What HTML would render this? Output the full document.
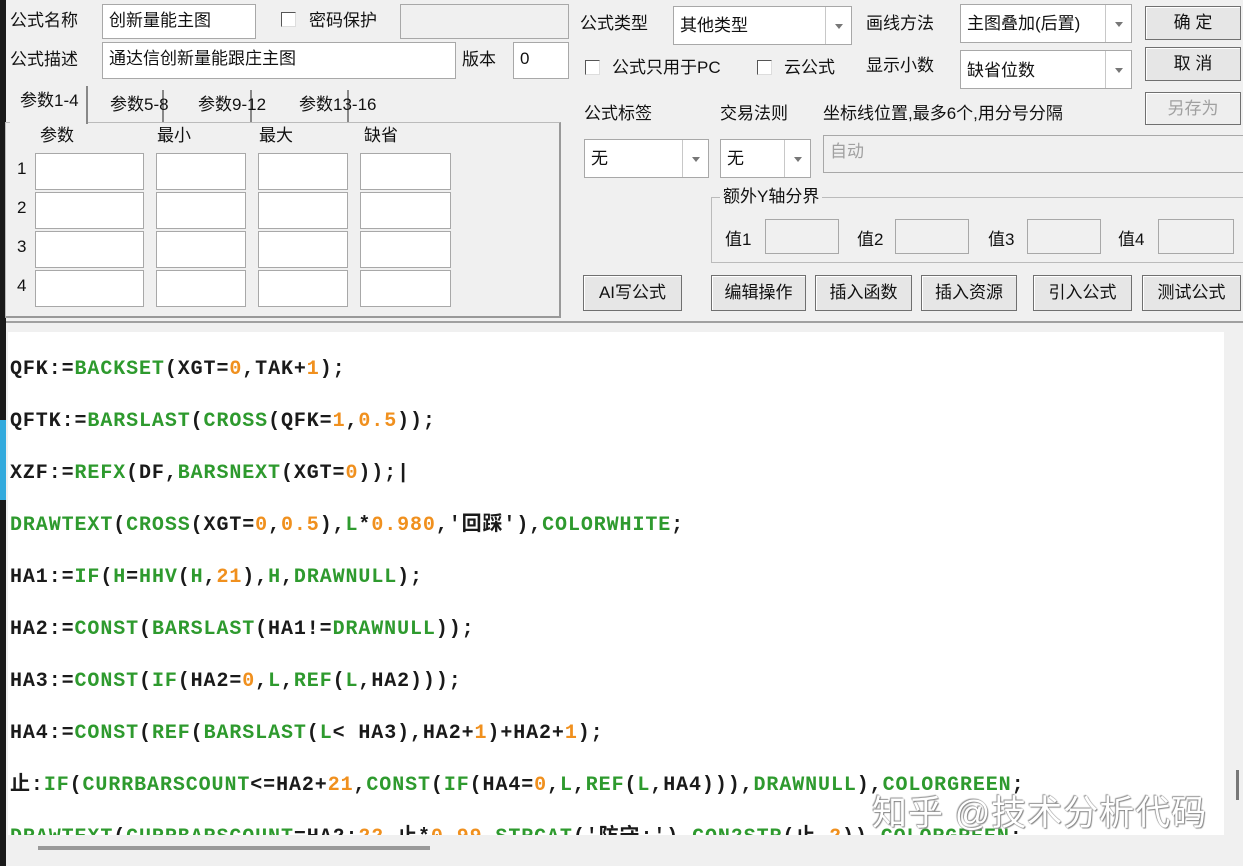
<!DOCTYPE html><html><head><meta charset="utf-8"><style>
*{margin:0;padding:0;box-sizing:border-box}
body{width:1243px;height:866px;background:#f0f0f0;position:relative;overflow:hidden;font-family:"Liberation Sans","Noto Sans CJK SC",sans-serif;font-size:17px;color:#111}
.a{position:absolute;white-space:nowrap;line-height:22px}
.in{position:absolute;background:#fff;border:1px solid #a8a8a8;padding:2px 6px;line-height:28px}
.dis{background:#f0f0f0;color:#a0a0a0}
.cb{position:absolute;width:15px;height:15px;border:1px solid #555;border-right-color:#ddd;border-bottom-color:#ddd;background:#fff}
.cmb{position:absolute;background:#fff;border:1px solid #a8a8a8;padding:0 6px;}
.cmb .ar{position:absolute;right:0;top:0;bottom:0;width:26px;border-left:1px solid #c8c8c8}
.cmb .ar:after{content:"";position:absolute;left:9px;top:50%;margin-top:-2px;border:4px solid transparent;border-top:5px solid #777}
.btn{position:absolute;border:1px solid #707070;background:#e6e6e6;box-shadow:inset 1px 1px 0 #fff;text-align:center;font-size:17px}
.code{position:absolute;left:8px;top:332px;width:1216px;height:503px;background:#fff;overflow:hidden;font-family:"Liberation Mono","Noto Sans CJK SC",monospace;font-weight:bold;font-size:20px;letter-spacing:0.9px;color:#1a1a1a}
.code div{position:absolute;left:2px;white-space:pre;line-height:24px;height:24px}
.g{color:#2e9a2e}.o{color:#f0901e}
</style></head><body>
<div class="a" style="left:0;top:0;width:6px;height:866px;background:#1a1a1a"></div>
<div class="a" style="left:0;top:420px;width:6px;height:80px;background:#3ad"></div>
<div class="a" style="left:10px;top:10px">公式名称</div>
<div class="in" style="left:102px;top:4px;width:154px;height:35px">创新量能主图</div>
<div class="cb" style="left:281px;top:12px"></div>
<div class="a" style="left:309px;top:10px">密码保护</div>
<div class="in dis" style="left:400px;top:4px;width:169px;height:35px"></div>
<div class="a" style="left:10px;top:49px">公式描述</div>
<div class="in" style="left:102px;top:42px;width:354px;height:37px">通达信创新量能跟庄主图</div>
<div class="a" style="left:462px;top:49px">版本</div>
<div class="in" style="left:513px;top:42px;width:56px;height:37px">0</div>
<div class="a" style="left:5px;top:122px;width:556px;height:196px;border:1px solid #bbb;border-right:2px solid #999;border-bottom:2px solid #999;background:#f0f0f0"></div>
<div class="a" style="left:10px;top:86px;width:78px;height:38px;background:#f0f0f0;border-right:2px solid #888;padding:4px 0 0 10px">参数1-4</div>
<div class="a" style="left:100px;top:90px;width:64px;height:32px;border-right:2px solid #888;padding:4px 0 0 10px">参数5-8</div>
<div class="a" style="left:166px;top:90px;width:86px;height:32px;border-right:2px solid #888;padding:4px 0 0 32px;">参数9-12</div>
<div class="a" style="left:253px;top:90px;width:96px;height:32px;border-right:2px solid #888;padding:4px 0 0 46px">参数13-16</div>
<div class="a" style="left:40px;top:125px">参数</div><div class="a" style="left:157px;top:125px">最小</div><div class="a" style="left:259px;top:125px">最大</div><div class="a" style="left:364px;top:125px">缺省</div>
<div class="a" style="left:17px;top:158px">1</div><div class="a" style="left:17px;top:197px">2</div><div class="a" style="left:17px;top:236px">3</div><div class="a" style="left:17px;top:275px">4</div>
<div class="in" style="left:35px;top:153px;width:109px;height:37px"></div><div class="in" style="left:156px;top:153px;width:90px;height:37px"></div><div class="in" style="left:258px;top:153px;width:90px;height:37px"></div><div class="in" style="left:360px;top:153px;width:91px;height:37px"></div>
<div class="in" style="left:35px;top:192px;width:109px;height:37px"></div><div class="in" style="left:156px;top:192px;width:90px;height:37px"></div><div class="in" style="left:258px;top:192px;width:90px;height:37px"></div><div class="in" style="left:360px;top:192px;width:91px;height:37px"></div>
<div class="in" style="left:35px;top:231px;width:109px;height:37px"></div><div class="in" style="left:156px;top:231px;width:90px;height:37px"></div><div class="in" style="left:258px;top:231px;width:90px;height:37px"></div><div class="in" style="left:360px;top:231px;width:91px;height:37px"></div>
<div class="in" style="left:35px;top:270px;width:109px;height:37px"></div><div class="in" style="left:156px;top:270px;width:90px;height:37px"></div><div class="in" style="left:258px;top:270px;width:90px;height:37px"></div><div class="in" style="left:360px;top:270px;width:91px;height:37px"></div>
<div class="a" style="left:580px;top:13px">公式类型</div>
<div class="cmb" style="left:673px;top:6px;width:179px;height:39px;line-height:37px">其他类型<span class="ar"></span></div>
<div class="a" style="left:866px;top:13px">画线方法</div>
<div class="cmb" style="left:960px;top:4px;width:172px;height:39px;line-height:37px">主图叠加(后置)<span class="ar"></span></div>
<div class="btn" style="left:1145px;top:6px;width:96px;height:34px;line-height:32px">确 定</div>
<div class="cb" style="left:585px;top:60px"></div><div class="a" style="left:612px;top:57px">公式只用于PC</div>
<div class="cb" style="left:757px;top:60px"></div><div class="a" style="left:784px;top:57px">云公式</div>
<div class="a" style="left:866px;top:55px">显示小数</div>
<div class="cmb" style="left:960px;top:50px;width:172px;height:39px;line-height:39px">缺省位数<span class="ar"></span></div>
<div class="btn" style="left:1145px;top:47px;width:96px;height:34px;line-height:32px">取 消</div>
<div class="btn" style="left:1145px;top:92px;width:96px;height:33px;line-height:31px;color:#a0a0a0;background:#eee">另存为</div>
<div class="a" style="left:584px;top:103px">公式标签</div><div class="a" style="left:720px;top:103px">交易法则</div><div class="a" style="left:823px;top:103px">坐标线位置,最多6个,用分号分隔</div>
<div class="cmb" style="left:584px;top:139px;width:125px;height:39px;line-height:37px">无<span class="ar"></span></div>
<div class="cmb" style="left:720px;top:139px;width:91px;height:39px;line-height:37px">无<span class="ar"></span></div>
<div class="in dis" style="left:823px;top:135px;width:430px;height:38px">自动</div>
<div class="a" style="left:711px;top:197px;width:540px;height:66px;border:1px solid #bbb"></div>
<div class="a" style="left:720px;top:186px;background:#f0f0f0;padding:0 3px">额外Y轴分界</div>
<div class="a" style="left:725px;top:229px">值1</div><div class="in dis" style="left:765px;top:219px;width:74px;height:35px;background:#f0f0f0"></div>
<div class="a" style="left:857px;top:229px">值2</div><div class="in dis" style="left:895px;top:219px;width:74px;height:35px"></div>
<div class="a" style="left:988px;top:229px">值3</div><div class="in dis" style="left:1027px;top:219px;width:74px;height:35px"></div>
<div class="a" style="left:1118px;top:229px">值4</div><div class="in dis" style="left:1158px;top:219px;width:76px;height:35px"></div>
<div class="btn" style="left:583px;top:275px;width:99px;height:36px;line-height:34px">AI写公式</div>
<div class="btn" style="left:711px;top:275px;width:95px;height:36px;line-height:34px">编辑操作</div>
<div class="btn" style="left:815px;top:275px;width:97px;height:36px;line-height:34px">插入函数</div>
<div class="btn" style="left:921px;top:275px;width:96px;height:36px;line-height:34px">插入资源</div>
<div class="btn" style="left:1033px;top:275px;width:99px;height:36px;line-height:34px">引入公式</div>
<div class="btn" style="left:1142px;top:275px;width:99px;height:36px;line-height:34px">测试公式</div>
<div class="a" style="left:6px;top:321px;width:1237px;height:2px;background:#a0a0a0"></div>
<div class="code">
<div style="top:26px">QFK:=<span class="g">BACKSET</span>(XGT=<span class="o">0</span>,TAK+<span class="o">1</span>);</div>
<div style="top:78px">QFTK:=<span class="g">BARSLAST</span>(<span class="g">CROSS</span>(QFK=<span class="o">1</span>,<span class="o">0.5</span>));</div>
<div style="top:130px">XZF:=<span class="g">REFX</span>(DF,<span class="g">BARSNEXT</span>(XGT=<span class="o">0</span>));|</div>
<div style="top:182px"><span class="g">DRAWTEXT</span>(<span class="g">CROSS</span>(XGT=<span class="o">0</span>,<span class="o">0.5</span>),<span class="g">L</span>*<span class="o">0.980</span>,'回踩'),<span class="g">COLORWHITE</span>;</div>
<div style="top:234px">HA1:=<span class="g">IF</span>(<span class="g">H</span>=<span class="g">HHV</span>(<span class="g">H</span>,<span class="o">21</span>),<span class="g">H</span>,<span class="g">DRAWNULL</span>);</div>
<div style="top:286px">HA2:=<span class="g">CONST</span>(<span class="g">BARSLAST</span>(HA1!=<span class="g">DRAWNULL</span>));</div>
<div style="top:338px">HA3:=<span class="g">CONST</span>(<span class="g">IF</span>(HA2=<span class="o">0</span>,<span class="g">L</span>,<span class="g">REF</span>(<span class="g">L</span>,HA2)));</div>
<div style="top:390px">HA4:=<span class="g">CONST</span>(<span class="g">REF</span>(<span class="g">BARSLAST</span>(<span class="g">L</span>&lt; HA3),HA2+<span class="o">1</span>)+HA2+<span class="o">1</span>);</div>
<div style="top:442px">止:<span class="g">IF</span>(<span class="g">CURRBARSCOUNT</span>&lt;=HA2+<span class="o">21</span>,<span class="g">CONST</span>(<span class="g">IF</span>(HA4=<span class="o">0</span>,<span class="g">L</span>,<span class="g">REF</span>(<span class="g">L</span>,HA4))),<span class="g">DRAWNULL</span>),<span class="g">COLORGREEN</span>;</div>
<div style="top:494px"><span class="g">DRAWTEXT</span>(<span class="g">CURRBARSCOUNT</span>=HA2:<span class="o">22</span>,止*<span class="o">0.99</span>,<span class="g">STRCAT</span>('防守:'),<span class="g">CON2STR</span>(止,<span class="o">2</span>)),<span class="g">COLORGREEN</span>;</div>
</div>
<div class="a" style="left:872px;top:794px;font-size:35px;line-height:40px;color:#fff;letter-spacing:1px;text-shadow:0 0 1px #777,1px 1px 1px #888,-1px -1px 1px #999">知乎 @技术分析代码</div>
<div class="a" style="left:1236px;top:770px;width:3px;height:30px;background:#777"></div>
<div class="a" style="left:38px;top:846px;width:392px;height:4px;background:#999"></div>
</body></html>
